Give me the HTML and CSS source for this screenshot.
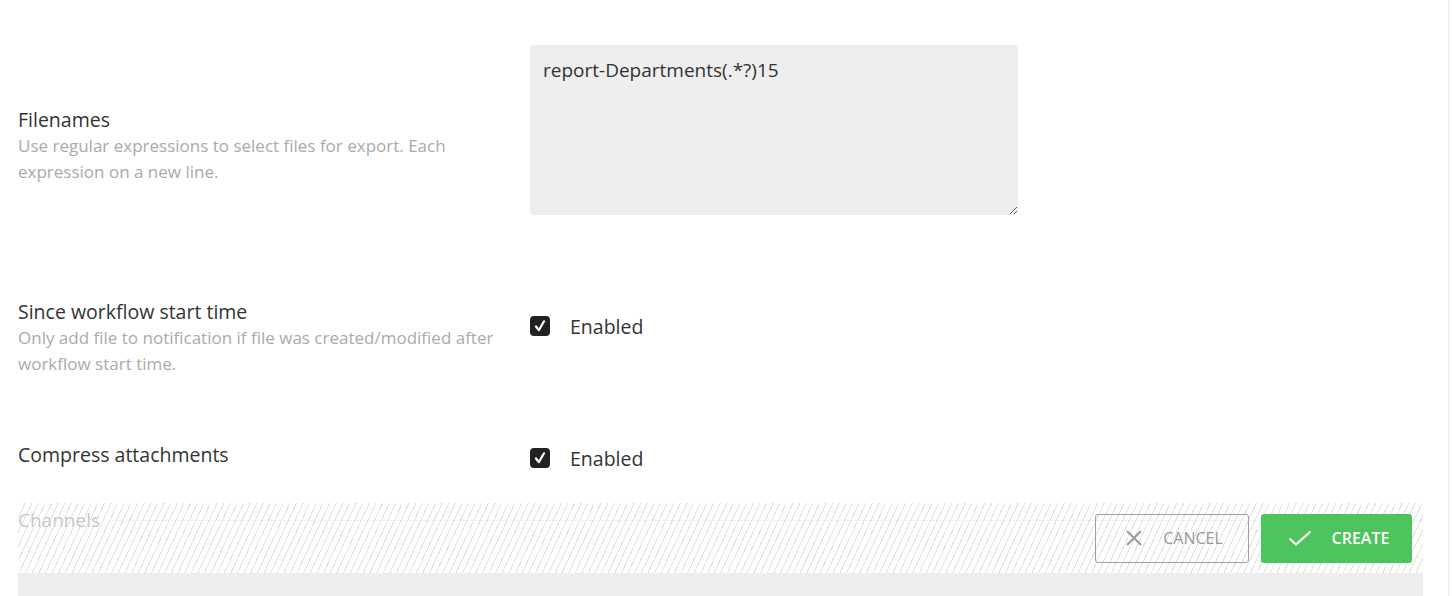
FILE: index.html
```html
<!DOCTYPE html>
<html lang="en">
<head>
  <meta charset="UTF-8" />
  <meta name="viewport" content="width=device-width, initial-scale=1.0"/>
  <title>Export settings</title>
  <link rel="stylesheet" href="styles.css">
</head>
<body>

  <div class="frame">
    <div class="form">

      <div class="row row-filenames">
        <div class="field-info">
          <div class="field-label">Filenames</div>
          <div class="field-desc">Use regular expressions to select files for export. Each expression on a new line.</div>
        </div>
        <div class="field-control">
          <textarea class="regex-input" spellcheck="false">report-Departments(.*?)15</textarea>
        </div>
      </div>

      <div class="row row-since">
        <div class="field-info">
          <div class="field-label">Since workflow start time</div>
          <div class="field-desc">Only add file to notification if file was created/modified after workflow start time.</div>
        </div>
        <div class="field-control">
          <label class="check">
            <span class="check-box">
              <svg width="14" height="14" viewBox="0 0 14 14"><path d="M3 7.5 L5.8 11.2 L11 2.3" fill="none" stroke="#fff" stroke-width="2.2" stroke-linecap="round" stroke-linejoin="round"/></svg>
            </span>
            <span class="check-text">Enabled</span>
          </label>
        </div>
      </div>

      <div class="row row-compress">
        <div class="field-info">
          <div class="field-label">Compress attachments</div>
        </div>
        <div class="field-control">
          <label class="check">
            <span class="check-box">
              <svg width="14" height="14" viewBox="0 0 14 14"><path d="M3 7.5 L5.8 11.2 L11 2.3" fill="none" stroke="#fff" stroke-width="2.2" stroke-linecap="round" stroke-linejoin="round"/></svg>
            </span>
            <span class="check-text">Enabled</span>
          </label>
        </div>
      </div>

      <div class="section">
        <div class="section-title"><span>Channels</span></div>
        <div class="section-body"></div>
      </div>

      <!-- sticky footer sits over the form -->
      <div class="footer">
        <button class="btn btn-cancel">
          <svg width="18" height="18" viewBox="0 0 18 18"><path d="M2 2 L16 16 M16 2 L2 16" stroke="#999" stroke-width="2" fill="none"/></svg>
          <span>CANCEL</span>
        </button>
        <button class="btn btn-create">
          <svg width="24" height="16" viewBox="0 0 24 16"><path d="M1.5 8.5 L8 14.5 L22.5 1.5" stroke="#fff" stroke-width="2.2" fill="none"/></svg>
          <span>CREATE</span>
        </button>
      </div>

    </div>
  </div>

</body>
</html>
```

FILE: styles.css
```css
html {
  background: #fafafa;
}

body {
  margin: 0;
  font-family: "Open Sans", "Noto Sans", sans-serif;
  color: #333;
}

.frame {
  width: 1448px;
  height: 596px;
  overflow: hidden;
  background: #fff;
  border-right: 1px solid #ececec;
}

.form {
  position: relative;
  margin-left: 18px;
  width: 1405px;
}

.row {
  display: grid;
  grid-template-columns: 512px 488px;
}

.row-filenames {
  padding-top: 45px;
}

.row-filenames .field-info {
  padding-top: 62px;
}

.row-since {
  margin-top: 84px;
}

.row-since .field-control {
  padding-top: 17px;
}

.row-compress {
  margin-top: 65px;
}

.row-compress .field-control {
  padding-top: 6px;
}

.field-label {
  font-size: 19.5px;
  line-height: 26px;
  color: #333;
}

.field-desc {
  font-size: 17px;
  line-height: 26px;
  color: #aaa;
  padding-right: 10px;
}

.regex-input {
  display: block;
  width: 488px;
  height: 170px;
  box-sizing: border-box;
  margin: 0;
  padding: 12px 13px;
  border: none;
  border-radius: 4px;
  background: #eee;
  color: #333;
  font-family: "Open Sans", "Noto Sans", sans-serif;
  font-size: 19px;
  line-height: 26px;
  outline: none;
}

.check {
  display: flex;
  align-items: center;
  gap: 20px;
  height: 20px;
}

.check-box {
  width: 20px;
  height: 20px;
  border-radius: 4px;
  background: #222;
  display: flex;
  align-items: center;
  justify-content: center;
}

.check-text {
  font-size: 19.5px;
  color: #333;
}

.section {
  margin-top: 39px;
}

.section-title {
  display: flex;
  align-items: center;
  gap: 10px;
  font-size: 19px;
  line-height: 26px;
  color: #8c8c8c;
}

.section-title::after {
  content: "";
  flex: 1;
  height: 1px;
  background: #e6e6e6;
}

.section-body {
  margin-top: 40px;
  height: 60px;
  background: #eee;
}

.footer {
  position: absolute;
  left: 0;
  right: 0;
  top: 503px;
  height: 70px;
  box-sizing: border-box;
  padding-right: 11px;
  display: flex;
  align-items: center;
  justify-content: flex-end;
  gap: 12px;
  background: repeating-linear-gradient(115deg, rgba(222, 222, 222, 0.9) 0 1px, rgba(255, 255, 255, 0.5) 1px 6px);
}

.btn {
  height: 49px;
  display: flex;
  align-items: center;
  justify-content: center;
  gap: 20px;
  border-radius: 3px;
  font-family: "Open Sans", "Noto Sans", sans-serif;
  font-size: 16px;
  cursor: pointer;
}

.btn-cancel {
  width: 154px;
  padding-left: 10px;
  border: 1px solid #a0a0a0;
  background: transparent;
  color: #999;
}

.btn-create {
  width: 151px;
  padding-left: 10px;
  border: none;
  background: #4dc45d;
  color: #fff;
  font-weight: 600;
}
```
